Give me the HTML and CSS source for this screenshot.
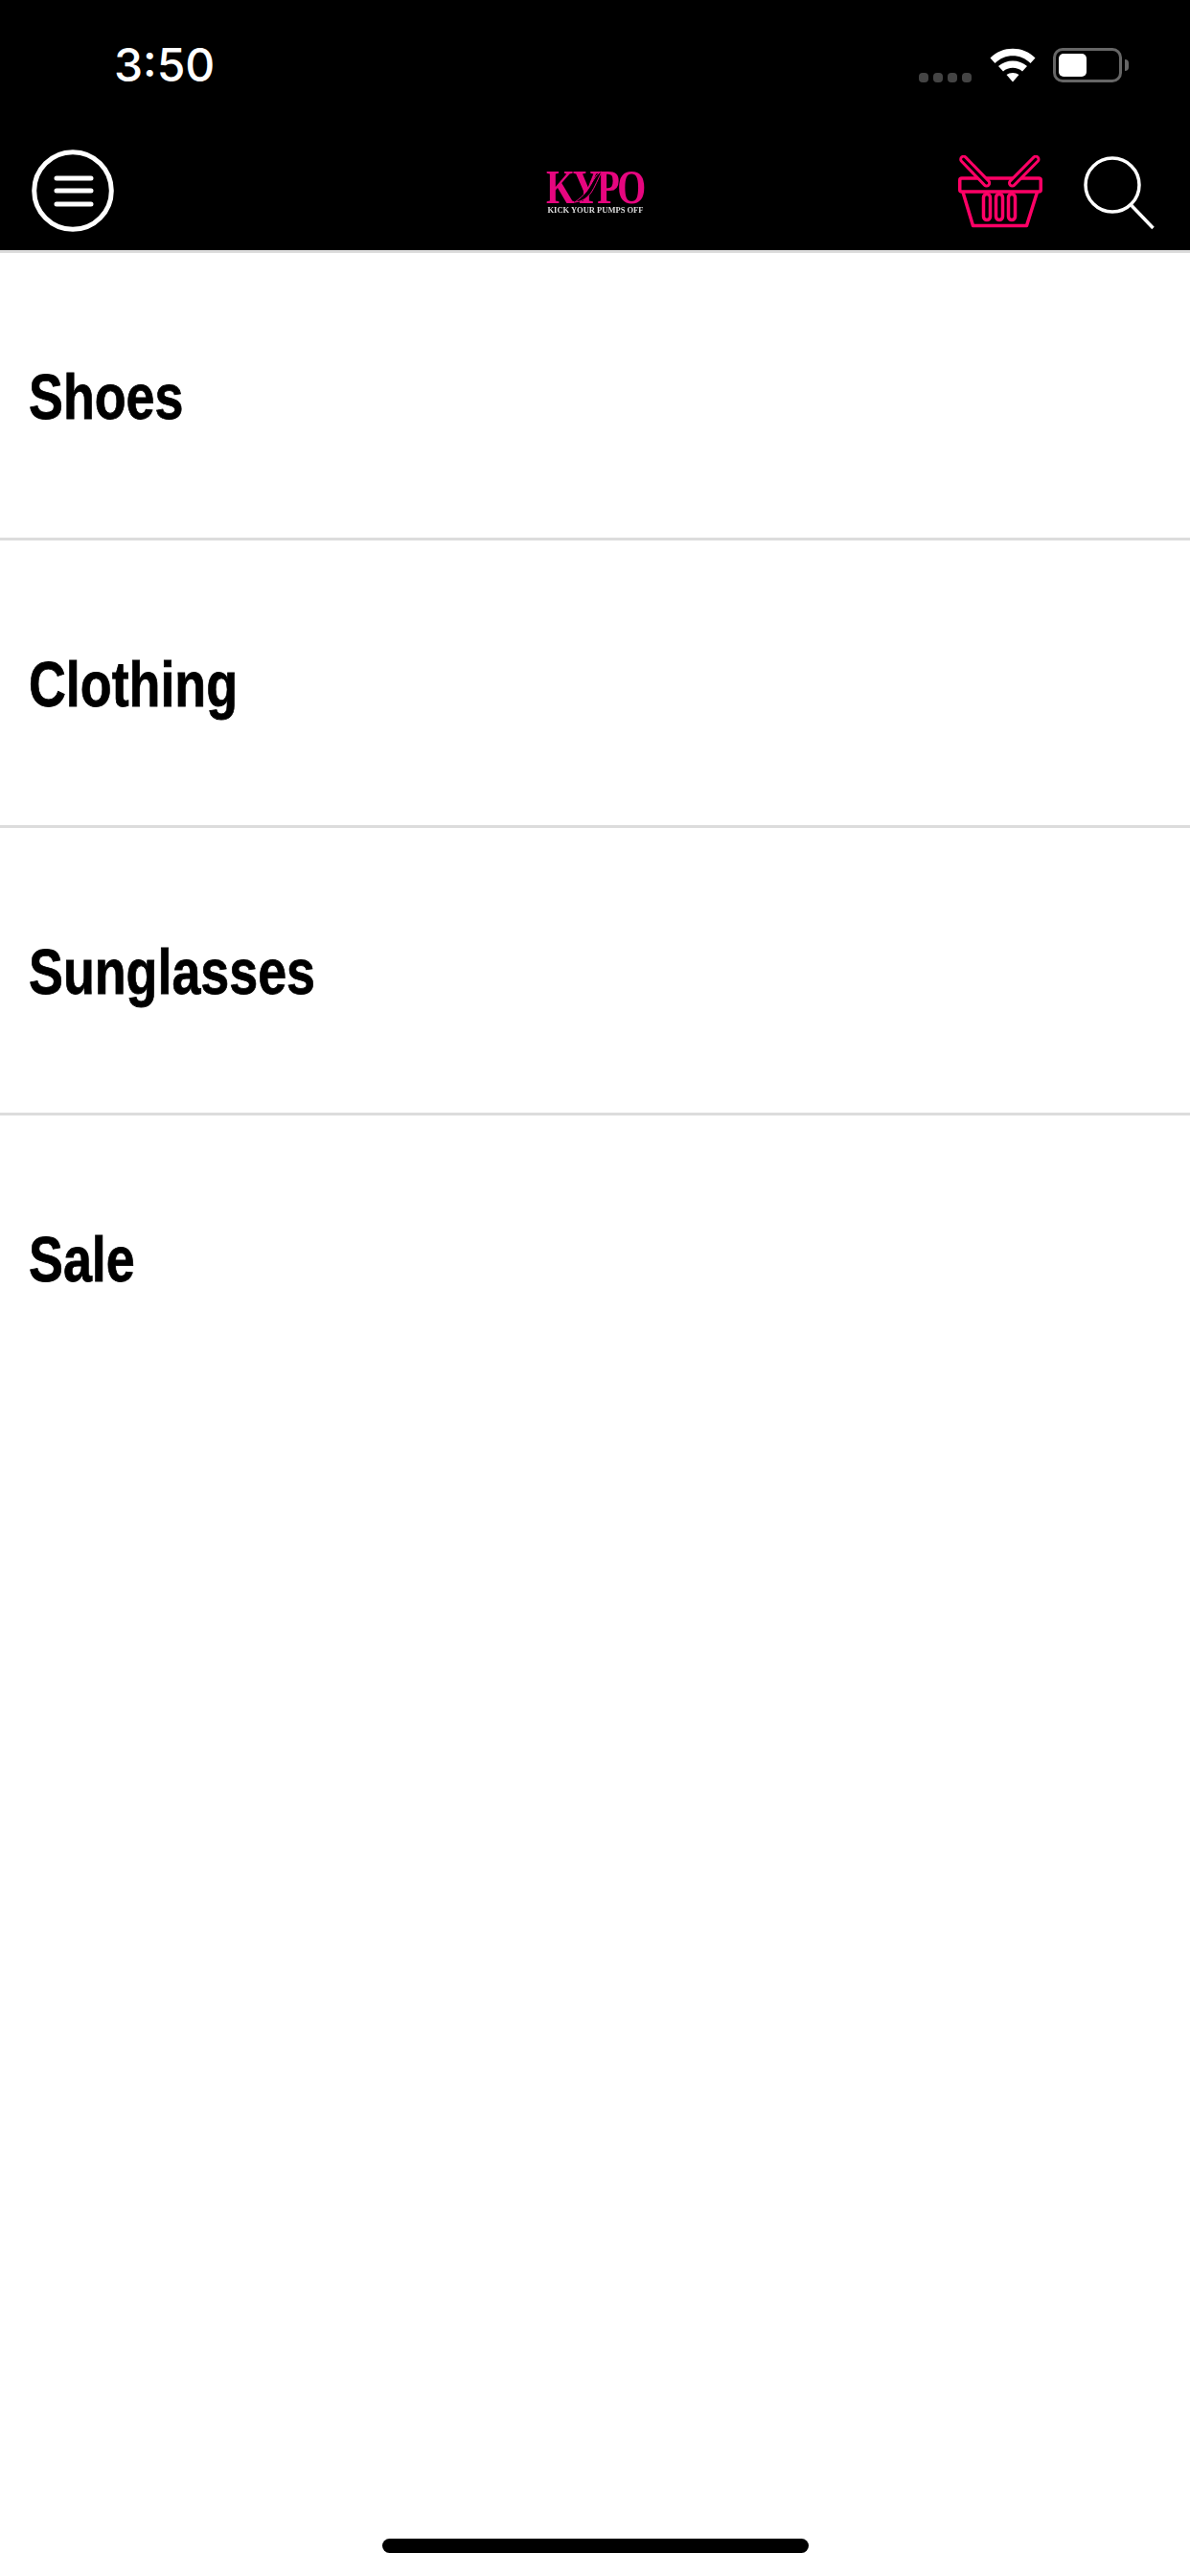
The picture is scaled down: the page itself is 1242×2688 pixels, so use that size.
FILE: index.html
```html
<!DOCTYPE html>
<html lang="en">
<head>
    <meta charset="UTF-8">
    <title>KYPO</title>
    <link rel="stylesheet" href="styles.css">
</head>
<body>
    <header class="top">
        <div class="status">
            <span class="time">3:50</span>
            <div class="status-icons">
                <div class="dots"><i></i><i></i><i></i><i></i></div>
                <svg class="wifi" width="48" height="37" viewBox="0 0 48 37">
                    <path d="M0.5 11.5C13 -1.5 35 -1.5 47.5 11.5L42.5 17C32.5 6.5 15.5 6.5 5.500 17Z" fill="#fff"/>
                    <path d="M9 20C17 12.500 31 12.500 39 20L34 25.500C28.500 20.500 19.500 20.500 14 25.500Z" fill="#fff"/>
                    <path d="M17.500 29C21 26.300 27 26.300 30.500 29L24 36.500Z" fill="#fff"/>
                </svg>
                <div class="battery"><div class="battery-level"></div></div>
                <div class="battery-nub"></div>
            </div>
        </div>
        <nav class="nav">
            <svg class="menu-icon" width="86" height="86" viewBox="0 0 86 86">
                <circle cx="43" cy="43" r="40.300" fill="none" stroke="#fff" stroke-width="5"/>
                <path d="M26 30H62M26 43H62M26 57H62" stroke="#fff" stroke-width="5" stroke-linecap="round"/>
            </svg>
            <div class="logo">
                <div class="logo-mark">KYPO</div>
                <svg class="logo-heel" width="40" height="34" viewBox="0 0 40 34">
                    <path d="M31 1C24 4 21 14 15 22C12 26 7 30 3 33C12 32 16 28 20 23C24 17 27 9 31 1Z" fill="#000" stroke="#e6067f" stroke-width="1"/>
                </svg>
                <div class="logo-tag">KICK YOUR PUMPS OFF</div>
            </div>
            <div class="nav-right">
                <svg class="basket" width="88" height="76" viewBox="0 0 88 76">
                    <g fill="none" stroke="#ff0066" stroke-width="3.500" stroke-linejoin="round">
                        <rect x="1.750" y="24" width="84.500" height="14" rx="2"/>
                        <path d="M5 38.500L15.500 73.500H71.500L82.500 38.500"/>
                        <rect x="26.500" y="40.500" width="7" height="27" rx="3.500"/>
                        <rect x="39.500" y="40.500" width="7" height="27" rx="3.500"/>
                        <rect x="52.500" y="40.500" width="7" height="27" rx="3.500"/>
                    </g>
                    <g stroke-linecap="round" fill="none">
                        <path d="M5.700 4.200L29.700 29M81 4.200L56.500 29" stroke="#ff0066" stroke-width="9"/>
                        <path d="M5.700 4.200L29.700 29M81 4.200L56.500 29" stroke="#000" stroke-width="3"/>
                    </g>
                </svg>
                <svg class="search" width="76" height="78" viewBox="0 0 76 78">
                    <circle cx="31" cy="31" r="28" fill="none" stroke="#fff" stroke-width="3.500"/>
                    <path d="M51 52.500L73.500 76" stroke="#fff" stroke-width="3.500"/>
                </svg>
            </div>
        </nav>
    </header>

    <main class="list">
        <a class="row"><span class="row-label">Shoes</span></a>
        <a class="row"><span class="row-label">Clothing</span></a>
        <a class="row"><span class="row-label">Sunglasses</span></a>
        <a class="row"><span class="row-label">Sale</span></a>
    </main>

    <div class="home-wrap"><div class="home-bar"></div></div>
</body>
</html>
```

FILE: styles.css
```css
html, body {
    margin: 0;
    padding: 0;
}

body {
    width: 1242px;
    height: 2688px;
    display: flex;
    flex-direction: column;
    background-color: #fff;
    overflow: hidden;
}

.top {
    height: 261px;
    background-color: #000;
    border-bottom: 3px solid #dcdcdc;
    display: flex;
    flex-direction: column;
}

.status {
    height: 137px;
    box-sizing: border-box;
    padding: 40px 64px 0 119px;
    display: flex;
    justify-content: space-between;
    align-items: flex-start;
}

.time {
    font-family: 'Inter', sans-serif;
    font-weight: 500;
    font-size: 48px;
    line-height: 56px;
    color: #fff;
}

.status-icons {
    margin-top: 9px;
    display: flex;
    align-items: center;
}

.dots {
    display: flex;
    gap: 5px;
    align-self: flex-end;
    margin-right: 19px;
}

.dots i {
    width: 10px;
    height: 10px;
    border-radius: 4px;
    background-color: #444;
}

.wifi {
    margin-right: 18px;
}

.battery {
    width: 72px;
    height: 36px;
    box-sizing: border-box;
    border: 3px solid #666;
    border-radius: 10px;
    padding: 3px;
}

.battery-level {
    width: 29px;
    height: 24px;
    background-color: #fff;
    border-radius: 5px;
}

.battery-nub {
    width: 4px;
    height: 12px;
    margin-left: 3px;
    background-color: #666;
    border-radius: 0 6px 6px 0;
}

.nav {
    flex: 1;
    padding: 19px 36px 0 33px;
    display: grid;
    grid-template-columns: 1fr 104px 1fr;
    align-items: start;
}

.logo {
    margin-top: 20px;
    margin-left: 2px;
    width: 104px;
    position: relative;
    filter: blur(0.4px);
}

.logo-mark {
    font-family: 'Liberation Serif', serif;
    font-weight: 700;
    font-size: 50px;
    line-height: 38px;
    letter-spacing: -3px;
    color: #e6067f;
    white-space: nowrap;
    transform: scaleX(0.77);
    transform-origin: left center;
}

.logo-heel {
    position: absolute;
    left: 27px;
    top: 2px;
}

.logo-tag {
    font-family: 'Liberation Serif', serif;
    font-weight: 700;
    font-size: 8.500px;
    line-height: 10px;
    color: #ddd;
    white-space: nowrap;
    text-align: center;
}

.nav-right {
    display: flex;
    justify-content: flex-end;
    gap: 42px;
    margin-top: 6px;
    align-items: flex-start;
}

.list {
    flex: 1;
    display: flex;
    flex-direction: column;
}

.row {
    height: 297px;
    padding-left: 30px;
    display: flex;
    align-items: center;
    border-bottom: 3px solid #dcdcdc;
    font-family: 'Liberation Sans', sans-serif;
    font-weight: 700;
    font-size: 66px;
    color: #000;
}

.row:last-child {
    border-bottom: none;
}

/* no condensed face installed, so squeeze the bold one */
.row-label {
    display: inline-block;
    margin-top: 3px;
    transform: scaleX(0.815);
    transform-origin: left center;
    -webkit-text-stroke: 0.8px #000;
}

.home-wrap {
    height: 39px;
    display: flex;
    justify-content: center;
}

.home-bar {
    width: 445px;
    height: 15px;
    background-color: #000;
    border-radius: 8px;
}
```
